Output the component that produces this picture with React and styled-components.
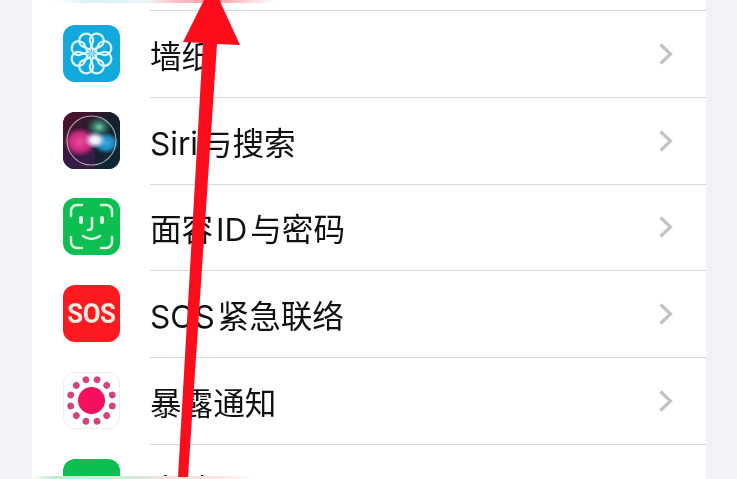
import React from "react";
import styled, { createGlobalStyle } from "styled-components";

const GlobalStyle = createGlobalStyle`
	html, body {
		margin: 0;
		padding: 0;
		background: #f2f2f9;
	}
`;

const WallpaperIcon = () => (
	<svg width="57" height="57" viewBox="0 0 57 57">
		<g transform="translate(28.5 28.5)" fill="none" stroke="#dcf6fb" strokeWidth="2.1">
			{[22.5, 67.5, 112.5, 157.5, 202.5, 247.5, 292.5, 337.5].map((angle) => (
				<path key={angle} transform={`rotate(${angle})`} d="M0 -4 L-6.4 -11 A7 7 0 1 1 6.4 -11 Z" />
			))}
			<circle r="2.8" fill="#8fd8ee" stroke="none" />
		</g>
	</svg>
);

const SiriIcon = () => (
	<svg width="57" height="57" viewBox="0 0 57 57">
		<defs>
			<linearGradient id="siriBg" x1="0" y1="0" x2="1" y2="1">
				<stop offset="0" stopColor="#5a0f30" />
				<stop offset="0.5" stopColor="#14202c" />
				<stop offset="1" stopColor="#0c2a35" />
			</linearGradient>
			<radialGradient id="siriPink">
				<stop offset="0" stopColor="#f04a98" />
				<stop offset="0.6" stopColor="#c42a7c" />
				<stop offset="1" stopColor="#a81e6a" stopOpacity="0" />
			</radialGradient>
			<radialGradient id="siriBlue">
				<stop offset="0" stopColor="#2fb0ea" />
				<stop offset="0.6" stopColor="#1f86b8" />
				<stop offset="1" stopColor="#1a6e9c" stopOpacity="0" />
			</radialGradient>
			<radialGradient id="siriGreen">
				<stop offset="0" stopColor="#6fd2a8" />
				<stop offset="1" stopColor="#2a8a70" stopOpacity="0" />
			</radialGradient>
			<radialGradient id="siriWhite">
				<stop offset="0" stopColor="#ffffff" />
				<stop offset="0.4" stopColor="#f2f4ff" stopOpacity="0.9" />
				<stop offset="1" stopColor="#c9b8ff" stopOpacity="0" />
			</radialGradient>
		</defs>
		<rect width="57" height="57" fill="url(#siriBg)" />
		<rect x="0" y="38" width="32" height="19" fill="#5a1360" opacity="0.5" />
		<ellipse cx="17" cy="30" rx="17" ry="15" fill="url(#siriPink)" />
		<ellipse cx="43" cy="31" rx="13" ry="11" fill="url(#siriBlue)" />
		<ellipse cx="36" cy="15" rx="13" ry="11" fill="url(#siriGreen)" />
		<ellipse cx="32" cy="28" rx="11" ry="9" fill="url(#siriWhite)" />
		<circle cx="28.5" cy="28.5" r="24.5" fill="none" stroke="#d8d0da" strokeOpacity="0.75" strokeWidth="1.1" />
	</svg>
);

const FaceIcon = () => (
	<svg width="57" height="57" viewBox="0 0 57 57" fill="none" stroke="#dcf8e5" strokeWidth="2.5" strokeLinecap="round">
		<path d="M8 18 V13 A6 6 0 0 1 14 7 H19" />
		<path d="M38 7 H43 A6 6 0 0 1 49 13 V18" />
		<path d="M8 39 V44 A6 6 0 0 0 14 50 H19" />
		<path d="M38 50 H43 A6 6 0 0 0 49 44 V39" />
		<path d="M18 20 V24" strokeWidth="4" />
		<path d="M39 20 V24" strokeWidth="4" />
		<path d="M29 20 V29 Q29 32 25 32" />
		<path d="M20 38 Q28.5 44 37 38" />
	</svg>
);

const ExposureIcon = () => (
	<svg width="55" height="55" viewBox="0 0 55 55">
		<g transform="translate(27.5 27.5)">
			<circle r="13.5" fill="#f5105f" />
			{[15, 45, 75, 105, 135, 165, 195, 225, 255, 285, 315, 345].map((angle) => (
				<circle key={angle} r="3.4" cy="-21.5" fill="#d2437f" transform={`rotate(${angle})`} />
			))}
		</g>
	</svg>
);

const SosIcon = () => <SosText>SOS</SosText>;

const rows = [
	{ id: "wallpaper", label: "墙纸", bg: "#12a9dc", icon: <WallpaperIcon /> },
	{ id: "siri", label: "Siri 与搜索", bg: "#14202c", icon: <SiriIcon /> },
	{ id: "face", label: "面容 ID 与密码", bg: "#0cbf50", icon: <FaceIcon /> },
	{ id: "sos", label: "SOS 紧急联络", bg: "#fb1a1f", icon: <SosIcon /> },
	{ id: "exposure", label: "暴露通知", bg: "#ffffff", outlined: true, icon: <ExposureIcon /> },
	{ id: "battery", label: "电池", bg: "#0cbf50", icon: null },
];

const App = () => {
	return (
		<Page>
			<GlobalStyle />
			<Card>
				<TopGlow />
				{rows.map((row) => (
					<Row key={row.id}>
						<IconTile $bg={row.bg} $outlined={row.outlined}>
							{row.icon}
						</IconTile>
						<RowBody>
							<Label>{row.label}</Label>
							<Chevron width="16" height="24" viewBox="0 0 16 24">
								<polyline points="2.5,2.5 12.5,12 2.5,21.5" />
							</Chevron>
						</RowBody>
					</Row>
				))}
			</Card>
			<BottomGlow />
			<Arrow width="737" height="479" viewBox="0 0 737 479">
				<polygon points="212,-16 240,45 217,44 188,477 178,477 203,43 183,42" fill="#fb0d1c" />
			</Arrow>
		</Page>
	);
};

const Page = styled.div`
	position: relative;
	width: 737px;
	height: 479px;
	overflow: hidden;
	background: #f2f2f9;
	filter: blur(0.7px);
	font-family: "Inter", "Noto Sans CJK SC", sans-serif;
`;

const Card = styled.div`
	width: 674px;
	height: 479px;
	margin-left: 32px;
	background: #ffffff;
`;

const TopGlow = styled.div`
	height: 3px;
	margin-bottom: 7px;
	background: linear-gradient(
		90deg,
		#ffffff 3%,
		#d8f0f4 9%,
		#e8f5f7 17%,
		#fdc4c9 21%,
		#fb9aa2 27%,
		#fdc8cc 31%,
		#ffffff 36%
	);
`;

const Row = styled.div`
	display: flex;
	align-items: center;
	height: 86.8px;
	padding-left: 31px;
`;

const IconTile = styled.div`
	display: flex;
	flex: none;
	align-items: center;
	justify-content: center;
	box-sizing: border-box;
	width: 57px;
	height: 57px;
	overflow: hidden;
	border-radius: 12px;
	background: ${(props) => props.$bg};
	border: ${(props) => (props.$outlined ? "1px solid #f2e9ec" : "none")};
`;

const SosText = styled.span`
	font-family: "Roboto", "Liberation Sans", sans-serif;
	font-size: 27px;
	font-weight: 700;
	letter-spacing: -0.4px;
	transform: scaleX(0.95);
	color: #ffe9df;
`;

const RowBody = styled.div`
	display: flex;
	flex: 1;
	align-items: center;
	justify-content: space-between;
	align-self: stretch;
	margin-left: 30px;
	padding-right: 32px;
	border-top: 1px solid #d9d9dc;
`;

const Label = styled.span`
	padding-top: 6px;
	font-size: 31.6px;
	line-height: 36px;
	color: #111113;
	word-spacing: -6px;
`;

const Chevron = styled.svg`
	fill: none;
	stroke: #c3c3c6;
	stroke-width: 3.2;
`;

const BottomGlow = styled.div`
	position: absolute;
	left: 32px;
	right: 31px;
	bottom: 0;
	height: 3px;
	background: linear-gradient(
		90deg,
		#ffffff 0%,
		#c4ecd2 3%,
		#cdeed8 13%,
		#fbdcdc 22%,
		#fde6e6 28%,
		#ffffff 33%
	);
`;

const Arrow = styled.svg`
	position: absolute;
	top: 0;
	left: 0;
`;

export default App;
